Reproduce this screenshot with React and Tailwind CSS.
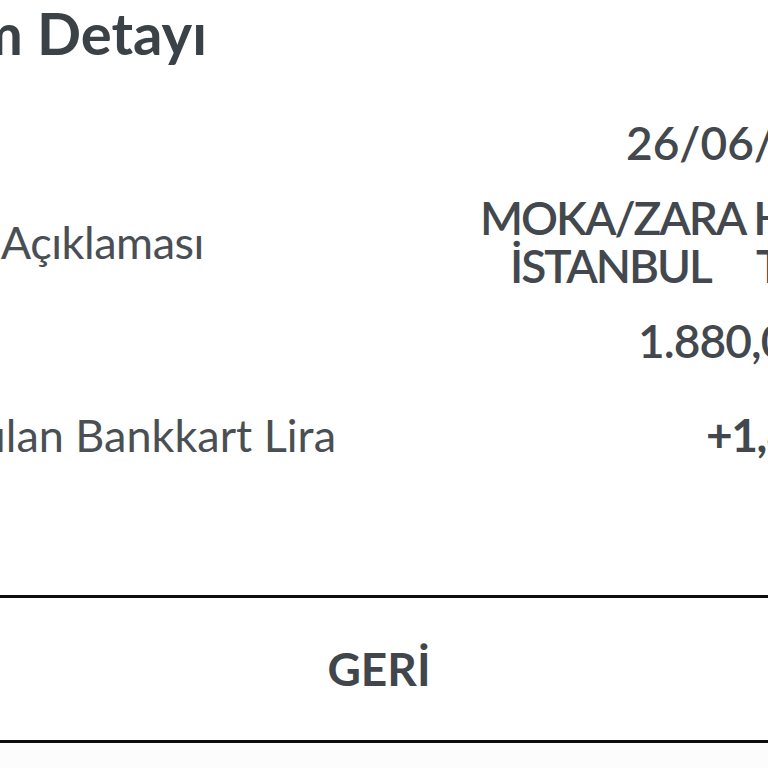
import React from "react";

export default function App() {
  return (
    <div
      className="w-[768px] h-[768px] overflow-hidden bg-white text-[#42484d]"
      style={{ fontFamily: "Lato, 'Open Sans', sans-serif" }}
    >
      {/* Title, cut at the left edge */}
      <div className="flex justify-end w-[207px] pt-[4px]">
        <h1 className="whitespace-nowrap text-[58px] leading-none font-bold text-[#3b4247]">
          İşlem Detayı
        </h1>
      </div>

      {/* Date */}
      <div className="mt-[58px] flex items-center">
        <div className="ml-[626px] whitespace-nowrap text-[46px] leading-none font-semibold">
          26/06/2023 14:32
        </div>
      </div>

      {/* Description */}
      <div className="mt-[28px] flex items-center">
        <div className="flex justify-end w-[204px] shrink-0">
          <span className="whitespace-nowrap text-[45px] leading-none tracking-[-0.01em] text-[#4a4f54]">
            İşlem Açıklaması
          </span>
        </div>
        <div className="ml-[276px] text-[46px] leading-[48px] font-semibold tracking-[-0.045em] whitespace-nowrap">
          <div>MOKA/ZARA HOME</div>
          <div className="flex pl-[30px]">
            <span className="w-[246px] shrink-0">İSTANBUL</span>
            <span>TR</span>
          </div>
        </div>
      </div>

      {/* Amount */}
      <div className="mt-[28px] flex items-center">
        <div className="ml-[638px] whitespace-nowrap text-[46px] leading-none font-semibold tracking-[-0.02em]">
          1.880,00 TL
        </div>
      </div>

      {/* Earned points */}
      <div className="mt-[48px] flex items-center">
        <div className="flex justify-end w-[336px] shrink-0">
          <span className="whitespace-nowrap text-[45px] leading-none text-[#4a4f54]">
            Kazanılan Bankkart Lira
          </span>
        </div>
        <div className="ml-[370px] whitespace-nowrap text-[46px] leading-none font-bold tracking-[-0.03em]">
          +1,88
        </div>
      </div>

      {/* Back button */}
      <div className="mt-[137px] border-t-[3px] border-b-[3px] border-[#0d0d0d]">
        <button className="w-full flex justify-center py-[48px] pr-[10px] bg-white">
          <span className="text-[46px] leading-none font-bold text-[#40464b]">GERİ</span>
        </button>
      </div>
      <div className="h-[30px] bg-[#fcfcfc]" />
    </div>
  );
}
